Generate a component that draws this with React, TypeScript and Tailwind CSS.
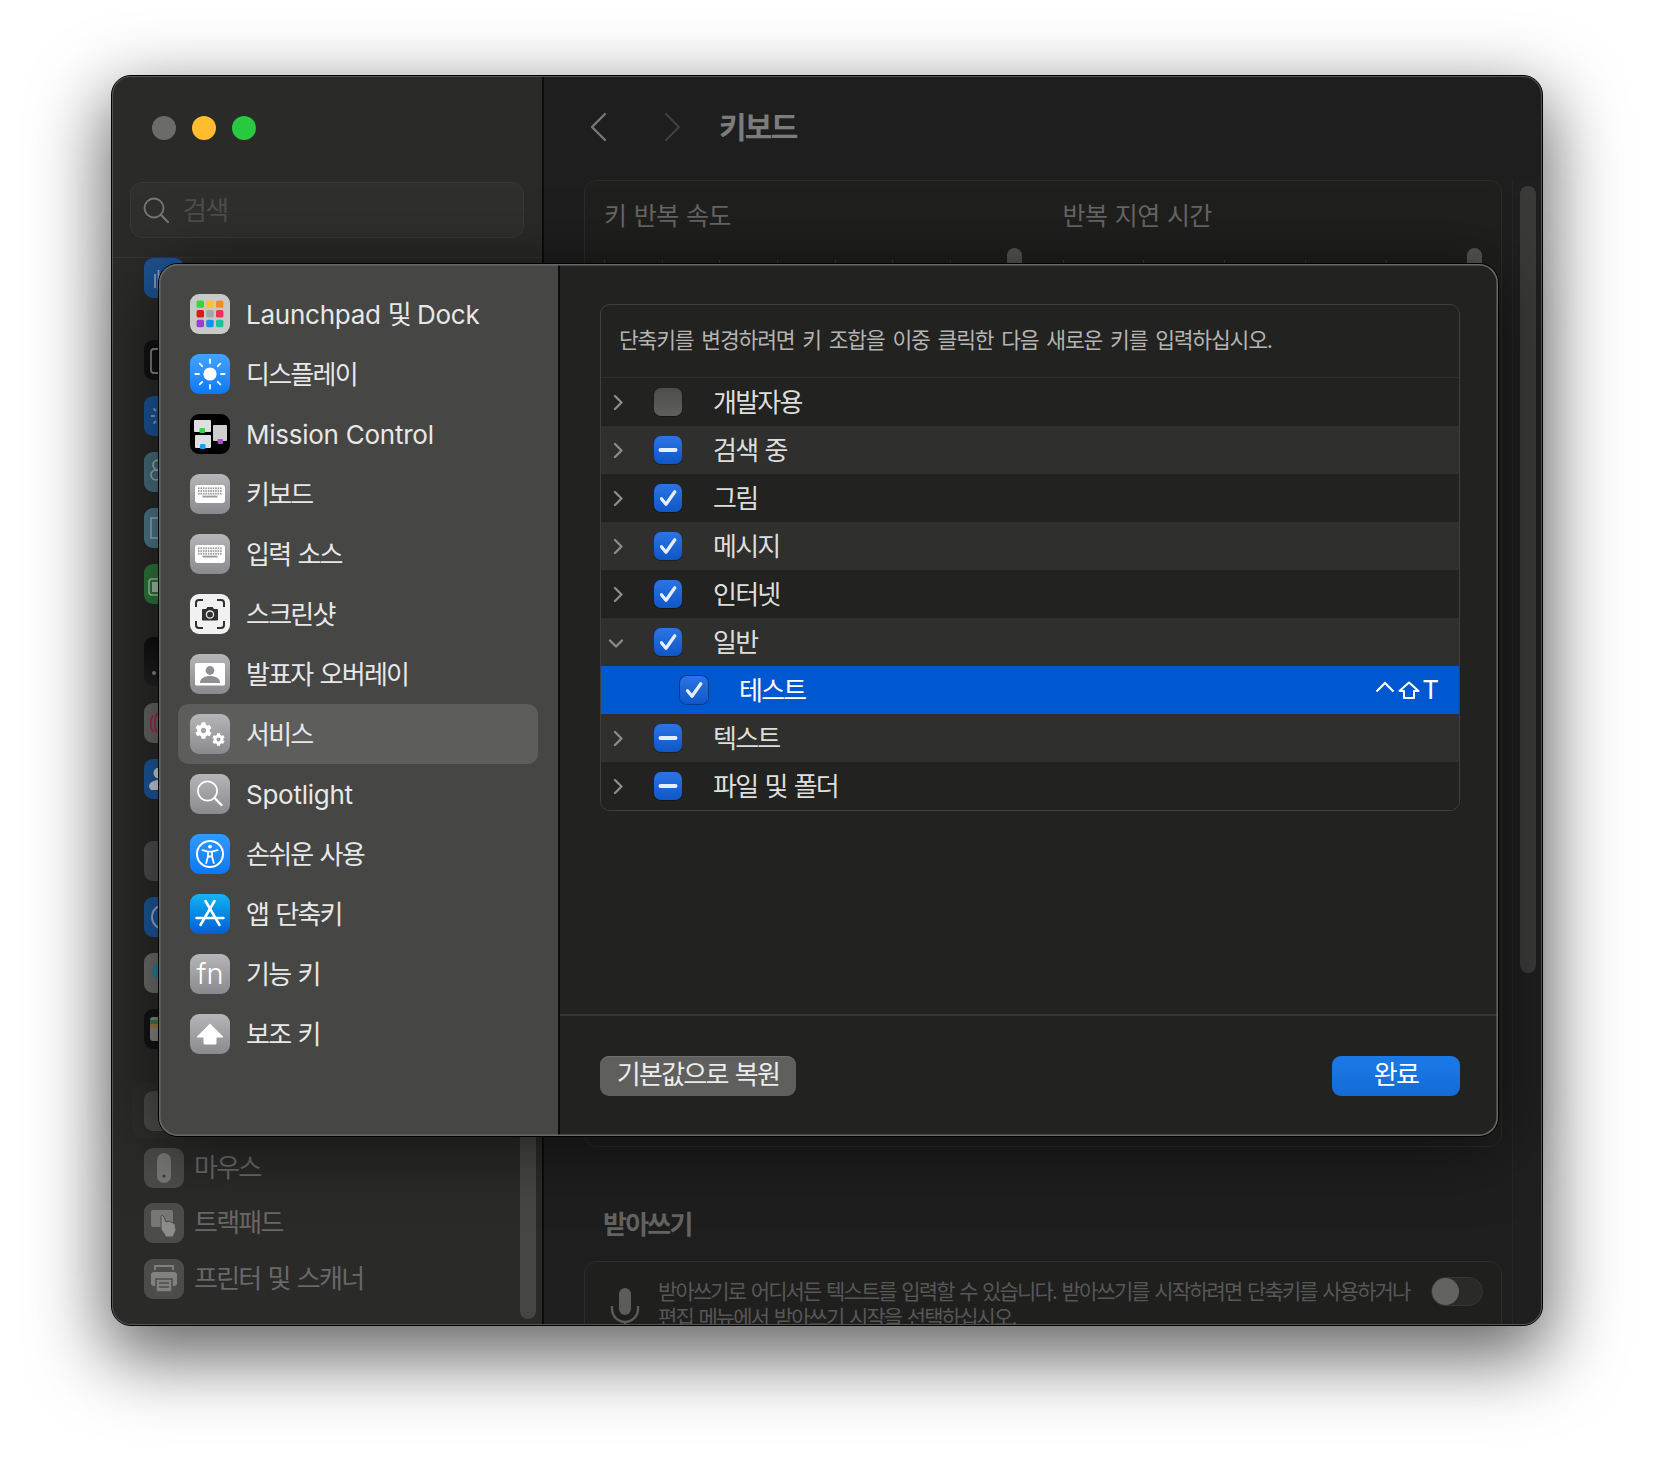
import React from "react";
import { FaCog } from "react-icons/fa";

function Ic({ bg, children }: { bg: string; children?: React.ReactNode }) {
  return (
    <div className={`relative w-[40px] h-[40px] rounded-[9px] shrink-0 overflow-hidden ${bg}`}>
      <svg viewBox="0 0 40 40" className="w-[40px] h-[40px] block">{children}</svg>
    </div>
  );
}

const GREY = "bg-linear-to-b from-[#b6b6b8] to-[#8a8a8e]";

function Launchpad() {
  const c = ["#3dd33d", "#fdc02f", "#f58a22", "#d91a1a", "#9fa8a8", "#f42f55", "#9c3cd0", "#1190ef", "#1fc19a"];
  return (
    <Ic bg="bg-[#c9c9c8]">
      {c.map((f, i) => (
        <rect key={i} x={6.6 + (i % 3) * 9.7} y={6.4 + Math.floor(i / 3) * 9.7} width="7.4" height="7.4" rx="1.6" fill={f} />
      ))}
    </Ic>
  );
}
function Display() {
  const rays = [0, 45, 90, 135, 180, 225, 270, 315];
  return (
    <Ic bg="bg-linear-to-b from-[#42a4ff] to-[#0a78f5]">
      <circle cx="20" cy="20" r="6.6" fill="#fff" />
      {rays.map((r) => (
        <line key={r} x1="20" y1="9" x2="20" y2="5.4" stroke="#fff" strokeWidth="1.8" strokeLinecap="round" transform={`rotate(${r} 20 20)`} />
      ))}
    </Ic>
  );
}
function Mission() {
  return (
    <Ic bg="bg-black">
      <rect x="4" y="6" width="17" height="12" rx="1" fill="#dfdfdf" />
      <rect x="5" y="21" width="16" height="13" rx="1" fill="#dfdfdf" />
      <rect x="23" y="11" width="14" height="16" rx="1" fill="#cfcfcf" />
      <rect x="9.5" y="14" width="5.5" height="5" rx="1" fill="#3fd14f" />
      <rect x="10" y="30" width="5.5" height="5" rx="1" fill="#17a2f5" />
      <rect x="27.5" y="25" width="5.5" height="5" rx="1" fill="#a64fd6" />
    </Ic>
  );
}
function Keyboard() {
  const dots: React.ReactNode[] = [];
  for (let r = 0; r < 3; r++)
    for (let i = 0; i < 10; i++)
      dots.push(<rect key={`${r}${i}`} x={8 + i * 2.45} y={13.4 + r * 2.7} width="1.6" height="1.8" fill="#9b9b9e" />);
  return (
    <Ic bg={GREY}>
      <rect x="5" y="11" width="30" height="18" rx="2.4" fill="#fff" />
      {dots}
      <rect x="12.5" y="21.6" width="15" height="1.9" fill="#9b9b9e" />
    </Ic>
  );
}
function Screenshot() {
  return (
    <Ic bg="bg-[#f1f1f1]">
      <path d="M6 13V9a3 3 0 0 1 3-3h4M27 6h4a3 3 0 0 1 3 3v4M34 27v4a3 3 0 0 1-3 3h-4M13 34H9a3 3 0 0 1-3-3v-4" fill="none" stroke="#2f2f2f" strokeWidth="2" />
      <path d="M13 15h3l1.4-2h5.2l1.4 2h3a1 1 0 0 1 1 1v9.5a1 1 0 0 1-1 1H13a1 1 0 0 1-1-1V16a1 1 0 0 1 1-1z" fill="#2f2f2f" />
      <circle cx="20" cy="20.6" r="3.6" fill="none" stroke="#e8e8e8" strokeWidth="1.3" />
    </Ic>
  );
}
function Presenter() {
  return (
    <Ic bg={GREY}>
      <rect x="5" y="9" width="30" height="22.5" rx="1.6" fill="#fff" />
      <circle cx="20" cy="16.5" r="4.4" fill="#8f8f93" />
      <path d="M10 29c0-5 4.5-7 10-7s10 2 10 7z" fill="#8f8f93" />
    </Ic>
  );
}
function Services() {
  return (
    <div className={`relative w-[40px] h-[40px] rounded-[9px] shrink-0 ${GREY}`}>
      <FaCog className="absolute left-[5px] top-[8px] text-white" size={17} />
      <FaCog className="absolute left-[22px] top-[19px] text-white" size={13} />
    </div>
  );
}
function SpotlightIc() {
  return (
    <Ic bg={GREY}>
      <circle cx="17.5" cy="17" r="9.6" fill="none" stroke="#fff" strokeWidth="1.8" />
      <line x1="24.6" y1="24" x2="31.5" y2="31" stroke="#fff" strokeWidth="2.4" strokeLinecap="round" />
    </Ic>
  );
}
function Access() {
  return (
    <Ic bg="bg-linear-to-b from-[#2f9bff] to-[#0a78f5]">
      <circle cx="20" cy="20" r="13" fill="none" stroke="#fff" strokeWidth="2" />
      <circle cx="20" cy="12.6" r="1.9" fill="#fff" />
      <path d="M12.5 16.2 18 17.6v5l-1.8 6.4M27.5 16.2 22 17.6v5l1.8 6.4M18 17.6h4M18 22.5h4" fill="none" stroke="#fff" strokeWidth="1.8" strokeLinecap="round" strokeLinejoin="round" />
    </Ic>
  );
}
function AppStore() {
  return (
    <Ic bg="bg-linear-to-b from-[#19b4f2] to-[#0a5cd6]">
      <path d="M15.5 7 29.5 31M24.5 7 10.5 31M6.5 24h27" fill="none" stroke="#fff" strokeWidth="2.6" strokeLinecap="round" />
    </Ic>
  );
}
function Fn() {
  return (
    <div className={`w-[40px] h-[40px] rounded-[9px] shrink-0 flex items-center justify-center text-[29px] font-light text-white leading-none pb-[2px] [font-family:Inter,sans-serif] ${GREY}`}>
      fn
    </div>
  );
}
function Modifier() {
  return (
    <Ic bg={GREY}>
      <path d="M20 9.5 33 22.4c.4.5.1 1.1-.5 1.1H26.500V29a1.500 1.500 0 0 1-1.500 1.500H15a1.500 1.500 0 0 1-1.500-1.500v-5.500H7.500c-.6 0-.9-.6-.5-1.100z" fill="#fff" />
    </Ic>
  );
}

const HANGUL = "tracking-[-1.75px] [word-spacing:1.5px]";
const menu: { label: React.ReactNode; icon: React.ReactNode; sel?: boolean }[] = [
  { label: <>Launchpad <span className={HANGUL}>및</span> Dock</>, icon: <Launchpad /> },
  { label: <span className={HANGUL}>디스플레이</span>, icon: <Display /> },
  { label: "Mission Control", icon: <Mission /> },
  { label: <span className={HANGUL}>키보드</span>, icon: <Keyboard /> },
  { label: <span className={HANGUL}>입력 소스</span>, icon: <Keyboard /> },
  { label: <span className={HANGUL}>스크린샷</span>, icon: <Screenshot /> },
  { label: <span className={HANGUL}>발표자 오버레이</span>, icon: <Presenter /> },
  { label: <span className={HANGUL}>서비스</span>, icon: <Services />, sel: true },
  { label: "Spotlight", icon: <SpotlightIc /> },
  { label: <span className={HANGUL}>손쉬운 사용</span>, icon: <Access /> },
  { label: <span className={HANGUL}>앱 단축키</span>, icon: <AppStore /> },
  { label: <span className={HANGUL}>기능 키</span>, icon: <Fn /> },
  { label: <span className={HANGUL}>보조 키</span>, icon: <Modifier /> },
];

function Check({ state, dark }: { state: "on" | "mixed" | "off"; dark?: boolean }) {
  const bg =
    state === "off"
      ? "bg-linear-to-b from-[#4d4d4c] to-[#5f5f5e]"
      : "bg-linear-to-b from-[#2a74e6] to-[#0f57c6]";
  return (
    <div className={`w-[28px] h-[28px] rounded-[7px] shrink-0 ${bg} ${dark ? "shadow-[0_0_0_1px_rgba(0,50,130,0.8)]" : "shadow-[0_1px_1px_rgba(0,0,0,0.35)]"}`}>
      <svg viewBox="0 0 28 28" className="w-[28px] h-[28px] block">
        {state === "on" && <path d="M7.500 14.800 12 20.200 20.800 7.800" fill="none" stroke="#e6eefc" strokeWidth="3.300" strokeLinecap="round" strokeLinejoin="round" />}
        {state === "mixed" && <line x1="6.500" y1="14" x2="21.500" y2="14" stroke="#e6eefc" strokeWidth="4" strokeLinecap="round" />}
      </svg>
    </div>
  );
}

function Chev({ open }: { open?: boolean }) {
  return (
    <svg viewBox="0 0 16 16" className={`w-[16px] h-[16px] shrink-0 ${open ? "ml-[-3px] mr-[3px]" : ""}`}>
      <path d={open ? "M3 6.500 9 12.500 15 6.500" : "M5 2 11.500 8.500 5 15"} fill="none" stroke="#8c8c8b" strokeWidth="2.300" strokeLinecap="round" strokeLinejoin="round" />
    </svg>
  );
}

const rows: { t: string; s: "on" | "mixed" | "off"; bg: string; open?: boolean }[] = [
  { t: "개발자용", s: "off", bg: "bg-[#222220]" },
  { t: "검색 중", s: "mixed", bg: "bg-[#2f2f2e]" },
  { t: "그림", s: "on", bg: "bg-[#222220]" },
  { t: "메시지", s: "on", bg: "bg-[#2f2f2e]" },
  { t: "인터넷", s: "on", bg: "bg-[#222220]" },
  { t: "일반", s: "on", bg: "bg-[#2f2f2e]", open: true },
];
const rows2: typeof rows = [
  { t: "텍스트", s: "mixed", bg: "bg-[#2f2f2e]" },
  { t: "파일 및 폴더", s: "mixed", bg: "bg-[#222220]" },
];

function Row({ t, s, bg, open }: (typeof rows)[number]) {
  return (
    <div className={`h-[48px] flex items-center pl-[9px] ${bg}`}>
      <Chev open={open} />
      <div className="ml-[28px]"><Check state={s} /></div>
      <span className={`ml-[31px] pt-[2px] text-[26px] leading-none text-[#dededd] ${HANGUL}`}>{t}</span>
    </div>
  );
}

function SideBack({ bg, mt, h, children }: { bg: string; mt: string; h?: string; children?: React.ReactNode }) {
  return (
    <div className={`ml-[32px] w-[40px] ${h ?? "h-[40px]"} ${mt} rounded-[9px] shrink-0 overflow-hidden ${bg}`}>
      {children && <svg viewBox="0 0 40 40" className="w-[40px] h-[40px] block">{children}</svg>}
    </div>
  );
}

function Tick() {
  return <span className="w-[1px] h-[4px] bg-[#3a3a39]" />;
}
function Knob() {
  return <span className="w-[15px] h-[16px] mr-[-7px] rounded-t-full bg-[#555554]" />;
}

export default function App() {
  return (
    <div className="w-[1654px] h-[1474px] bg-white pt-[75px] pl-[111px] overflow-hidden [font-family:Inter,'Noto_Sans_CJK_KR',sans-serif]">
      <div className="relative w-[1432px] h-[1251px] rounded-[20px] border border-black shadow-[0_26px_72px_6px_rgba(0,0,0,0.6)] bg-[#1e1e1e]">
        <div className="flex w-full h-full rounded-[19px] overflow-hidden">
          {/* back sidebar */}
          <div className="relative w-[432px] shrink-0 bg-[#2a2a29] border-r-2 border-[#0c0c0c] flex flex-col overflow-hidden">
            <div className="shrink-0 h-[182px] border-b border-[#363635] flex flex-col">
              <div className="flex gap-[16px] pl-[40px] pt-[40px]">
                <span className="w-[24px] h-[24px] rounded-full bg-[#6b6b6a]" />
                <span className="w-[24px] h-[24px] rounded-full bg-[#febc2e]" />
                <span className="w-[24px] h-[24px] rounded-full bg-[#28c83f]" />
              </div>
              <div className="mt-[42px] ml-[18px] mr-[18px] h-[56px] rounded-[12px] border border-[#393938] bg-[#2f2f2e] flex items-center pl-[12px]">
                <svg viewBox="0 0 26 26" className="w-[26px] h-[26px] shrink-0">
                  <circle cx="11" cy="11" r="9.500" fill="none" stroke="#777776" strokeWidth="1.800" />
                  <line x1="18" y1="18" x2="25" y2="25" stroke="#777776" strokeWidth="2.200" strokeLinecap="round" />
                </svg>
                <span className={`ml-[14px] pt-[2px] text-[26px] leading-none text-[#4d4d4c] ${HANGUL}`}>검색</span>
              </div>
            </div>
            <div className="flex flex-col">
              <SideBack bg="bg-[#1d5596]" mt="mt-0">
                <path d="M11 16v14M14.500 12v20" stroke="#8ba6c8" strokeWidth="1.800" fill="none" />
              </SideBack>
              <SideBack bg="bg-[#131313]" mt="mt-[42px]">
                <rect x="7" y="9" width="20" height="24" rx="3" fill="none" stroke="#8a8a8a" strokeWidth="1.800" />
              </SideBack>
              <SideBack bg="bg-[#1c5698]" mt="mt-[16px]">
                <path d="M7 20h4M9.500 12.500l2.500 2.500M9.500 27.500l2.500-2.500" stroke="#8ba6c8" strokeWidth="1.800" fill="none" />
              </SideBack>
              <SideBack bg="bg-[#47707f]" mt="mt-[16px]">
                <circle cx="14" cy="13" r="5" fill="none" stroke="#9db6bf" strokeWidth="1.600" />
                <circle cx="12" cy="23" r="5" fill="none" stroke="#9db6bf" strokeWidth="1.600" />
              </SideBack>
              <SideBack bg="bg-[#4d7a8c]" mt="mt-[16px]">
                <rect x="7" y="10" width="22" height="20" fill="none" stroke="#9db6bf" strokeWidth="1.600" />
              </SideBack>
              <SideBack bg="bg-[#2d7a3c]" mt="mt-[16px]">
                <rect x="5" y="15" width="26" height="16" rx="3" fill="none" stroke="#a4c8aa" strokeWidth="1.600" />
                <rect x="8" y="18" width="10" height="10" fill="#a4c8aa" />
              </SideBack>
              <SideBack bg="bg-linear-to-b from-[#0e0e0e] to-[#222]" mt="mt-[33px]" h="h-[49px]">
                <circle cx="10" cy="36" r="2" fill="#8a8a8a" />
              </SideBack>
              <SideBack bg="bg-[#696968]" mt="mt-[17px]">
                <path d="M9 12c-3 5-3 12 0 17M13 10c-3 6-3 14 0 20" stroke="#a62a42" strokeWidth="1.800" fill="none" />
              </SideBack>
              <SideBack bg="bg-[#1b5a9e]" mt="mt-[16px]">
                <circle cx="15" cy="14" r="5.500" fill="#ccd8e6" />
                <path d="M5 28c0-5 5-7 10-7v10H7z" fill="#ccd8e6" />
              </SideBack>
              <SideBack bg="bg-[#505050]" mt="mt-[42px]" />
              <SideBack bg="bg-[#1c5a9c]" mt="mt-[16px]">
                <circle cx="20" cy="20" r="12" fill="none" stroke="#9ab4d0" strokeWidth="2" />
              </SideBack>
              <SideBack bg="bg-[#6f6f6e]" mt="mt-[16px]">
                <circle cx="17" cy="18" r="9" fill="#2c7f9a" />
              </SideBack>
              <SideBack bg="bg-[#141414]" mt="mt-[16px]">
                <rect x="6" y="8" width="24" height="24" rx="3" fill="#8a8a88" />
                <rect x="6" y="11" width="24" height="4" fill="#3f7d48" />
                <rect x="6" y="15" width="24" height="4" fill="#a3803a" />
              </SideBack>
              <div className="mt-[34px] ml-[20px] mr-[20px] h-[55px] rounded-[10px] bg-[#2d2d2c] pt-[8px] shrink-0">
                <div className="ml-[12px] w-[40px] h-[40px] rounded-[9px] bg-[#4a4a49]" />
              </div>
              <div className="mt-[10px] ml-[32px] flex items-center gap-[10px] h-[40px] shrink-0">
                <Ic bg="bg-[#4c4c4b]">
                  <rect x="13" y="5" width="14" height="30" rx="7" fill="#787877" />
                  <circle cx="20" cy="28" r="1.600" fill="#3d3d3c" />
                </Ic>
                <span className={`text-[26px] leading-none text-[#686867] ${HANGUL}`}>마우스</span>
              </div>
              <div className="mt-[15px] ml-[32px] flex items-center gap-[10px] h-[40px] shrink-0">
                <Ic bg="bg-[#4c4c4b]">
                  <rect x="7" y="7" width="22" height="17" rx="2" fill="#787877" />
                  <path d="M17 13c1-1.500 2.500-.5 3 1l2 5 3-1 6 3 1 6-3 7h-7l-5-8z" fill="#8c8c8b" stroke="#4c4c4b" strokeWidth="1" />
                </Ic>
                <span className={`text-[26px] leading-none text-[#686867] ${HANGUL}`}>트랙패드</span>
              </div>
              <div className="mt-[16px] ml-[32px] flex items-center gap-[10px] h-[40px] shrink-0">
                <Ic bg="bg-[#4c4c4b]">
                  <path d="M11 11V7h18v4" fill="none" stroke="#818180" strokeWidth="1.800" />
                  <rect x="7" y="13" width="26" height="14" rx="3" fill="#818180" />
                  <rect x="12" y="20" width="16" height="13" fill="#818180" stroke="#4c4c4b" strokeWidth="1.500" />
                  <path d="M15 24h10M15 28h10" stroke="#4c4c4b" strokeWidth="1.300" />
                </Ic>
                <span className={`text-[26px] leading-none text-[#686867] ${HANGUL}`}>프린터 및 스캐너</span>
              </div>
            </div>
            <div className="absolute left-[408px] top-[950px] w-[16px] h-[293px] rounded-full bg-[#464645]" />
          </div>

          {/* back main */}
          <div className="relative flex-1 min-w-0 flex flex-col pl-[40px] pr-[40px] overflow-hidden">
            <div className="h-[104px] shrink-0 flex items-center pl-[5px] pb-[2px]">
              <svg viewBox="0 0 18 30" className="w-[18px] h-[30px] shrink-0">
                <path d="M16 2 3 15 16 28" fill="none" stroke="#777776" strokeWidth="2.400" strokeLinecap="round" strokeLinejoin="round" />
              </svg>
              <svg viewBox="0 0 18 30" className="w-[18px] h-[30px] shrink-0 ml-[57px]">
                <path d="M2 2 15 15 2 28" fill="none" stroke="#3e3e3d" strokeWidth="2.400" strokeLinecap="round" strokeLinejoin="round" />
              </svg>
              <span className={`ml-[37px] text-[30px] leading-none font-semibold text-[#7c7c7b] ${HANGUL}`}>키보드</span>
            </div>
            <div className="h-[967px] shrink-0 rounded-[12px] border border-[#2c2c2b] bg-[#1f1f1e] pl-[19px] pr-[19px] pt-[20px]">
              <div className="grid grid-cols-2 gap-x-[39px]">
                <div>
                  <div className="text-[25px] leading-[30px] text-[#666665] tracking-[-0.6px] [word-spacing:1px]">키 반복 속도</div>
                  <div className="mt-[17px] h-[16px] flex items-end justify-between pr-[8px]">
                    <Tick /><Tick /><Tick /><Tick /><Tick /><Tick /><Tick /><Knob />
                  </div>
                </div>
                <div>
                  <div className="text-[25px] leading-[30px] text-[#666665] tracking-[-0.6px] [word-spacing:1px]">반복 지연 시간</div>
                  <div className="mt-[17px] h-[16px] flex items-end justify-between pr-[7px]">
                    <Tick /><Tick /><Tick /><Tick /><Tick /><Knob />
                  </div>
                </div>
              </div>
            </div>
            <div className={`mt-[63px] ml-[19px] shrink-0 text-[26px] leading-[30px] font-semibold text-[#636362] ${HANGUL}`}>받아쓰기</div>
            <div className="mt-[21px] shrink-0 h-[120px] rounded-[12px] border border-[#2c2c2b] bg-[#1f1f1e] flex pl-[25px] pt-[15px]">
              <svg viewBox="0 0 30 44" className="w-[30px] h-[44px] shrink-0 mt-[10px]">
                <rect x="9" y="1" width="12" height="27" rx="6" fill="#5c5c5b" />
                <path d="M2 19v3a13 13 0 0 0 26 0v-3M15 35v9" fill="none" stroke="#5c5c5b" strokeWidth="2.400" />
              </svg>
              <div className="ml-[18px] pt-[2px] w-[773px] text-[21px] leading-[26px] text-[#575756] tracking-[-1.88px] [word-spacing:1.5px] whitespace-nowrap">
                받아쓰기로 어디서든 텍스트를 입력할 수 있습니다. 받아쓰기를 시작하려면 단축키를 사용하거나<br />편집 메뉴에서 받아쓰기 시작을 선택하십시오.
              </div>
              <div className="w-[52px] h-[29px] rounded-full bg-[#2a2a29] border border-[#363635] shrink-0">
                <div className="w-[27px] h-[27px] rounded-full bg-[#636362]" />
              </div>
            </div>
            <div className="absolute right-[1px] top-[104px] bottom-0 w-[29px] bg-[#1f1f1f] border-l border-[#262626]">
              <div className="ml-[7px] mt-[6px] w-[16px] h-[787px] rounded-full bg-[#3a3a39]" />
            </div>
          </div>
        </div>
        <div className="absolute inset-0 rounded-[19px] shadow-[inset_0_0_0_1px_#555] pointer-events-none" />

        {/* dialog */}
        <div className="absolute left-[46px] top-[187px] w-[1341px] h-[874px] rounded-[20px] border border-black shadow-[0_8px_70px_rgba(0,0,0,0.55)] bg-[#222220]">
          <div className="flex w-full h-full rounded-[19px] overflow-hidden">
            <div className="w-[401px] shrink-0 bg-[#464645] border-r-2 border-[#0b0b0b] pt-[30px] flex flex-col gap-[20px]">
              {menu.map((m, i) => (
                <div key={i} className={`relative h-[40px] flex items-center ml-[31px] gap-[16px] text-[26px] leading-none text-[#e8e8e7] ${m.sel ? "z-0" : ""}`}>
                  {m.sel && <div className="absolute -z-10 left-[-12px] top-[-10px] w-[360px] h-[60px] rounded-[10px] bg-[#5d5d5c]" />}
                  {m.icon}
                  <span className="tracking-[-0.25px] pt-[2px]">{m.label}</span>
                </div>
              ))}
            </div>
            <div className="flex-1 min-w-0 flex flex-col">
              <div className="h-[750px] pl-[40px] pr-[38px] pt-[40px] shrink-0">
                <div className="h-[507px] rounded-[10px] border border-[#3f3f3e] overflow-hidden">
                  <div className="h-[73px] flex items-center pl-[18px] border-b border-[#2e2e2d] text-[21.5px] leading-none text-[#b4b4b3] tracking-[-1.17px] [word-spacing:3px]">
                    단축키를 변경하려면 키 조합을 이중 클릭한 다음 새로운 키를 입력하십시오.
                  </div>
                  {rows.map((r) => <Row key={r.t} {...r} />)}
                  <div className="h-[48px] flex items-center bg-[#0058d0] pl-[79px] pr-[20px]">
                    <Check state="on" dark />
                    <span className={`ml-[31px] pt-[2px] text-[26px] leading-none text-white ${HANGUL}`}>테스트</span>
                    <svg viewBox="0 0 20 12" className="ml-auto w-[20px] h-[12px] shrink-0 mb-[6px]">
                      <path d="M1.500 10.500 10 2 18.500 10.500" fill="none" stroke="#fff" strokeWidth="2.200" />
                    </svg>
                    <svg viewBox="0 0 22 18" className="ml-[3px] w-[22px] h-[18px] shrink-0">
                      <path d="M11 1.500 20.500 10H16v7H6v-7H1.500z" fill="none" stroke="#fff" strokeWidth="2" strokeLinejoin="round" />
                    </svg>
                    <span className="ml-[2px] text-[26px] leading-none text-white [font-family:Inter,sans-serif]">T</span>
                  </div>
                  {rows2.map((r) => <Row key={r.t} {...r} />)}
                </div>
              </div>
              <div className="flex-1 border-t-2 border-[#353534] pl-[40px] pr-[38px] pb-[40px] flex items-end justify-between">
                <button className={`h-[40px] w-[196px] rounded-[9px] bg-[#5f5f5e] text-[26px] leading-none text-[#ececeb] pb-[3px] shadow-[inset_0_1px_0_#707070] ${HANGUL}`}>기본값으로 복원</button>
                <button className={`h-[40px] w-[128px] rounded-[9px] bg-linear-to-b from-[#1b7ae8] to-[#136bd6] text-[26px] leading-none text-white pb-[3px] ${HANGUL}`}>완료</button>
              </div>
            </div>
          </div>
          <div className="absolute inset-0 rounded-[19px] shadow-[inset_0_0_0_1.5px_#686867] pointer-events-none" />
        </div>
      </div>
    </div>
  );
}
